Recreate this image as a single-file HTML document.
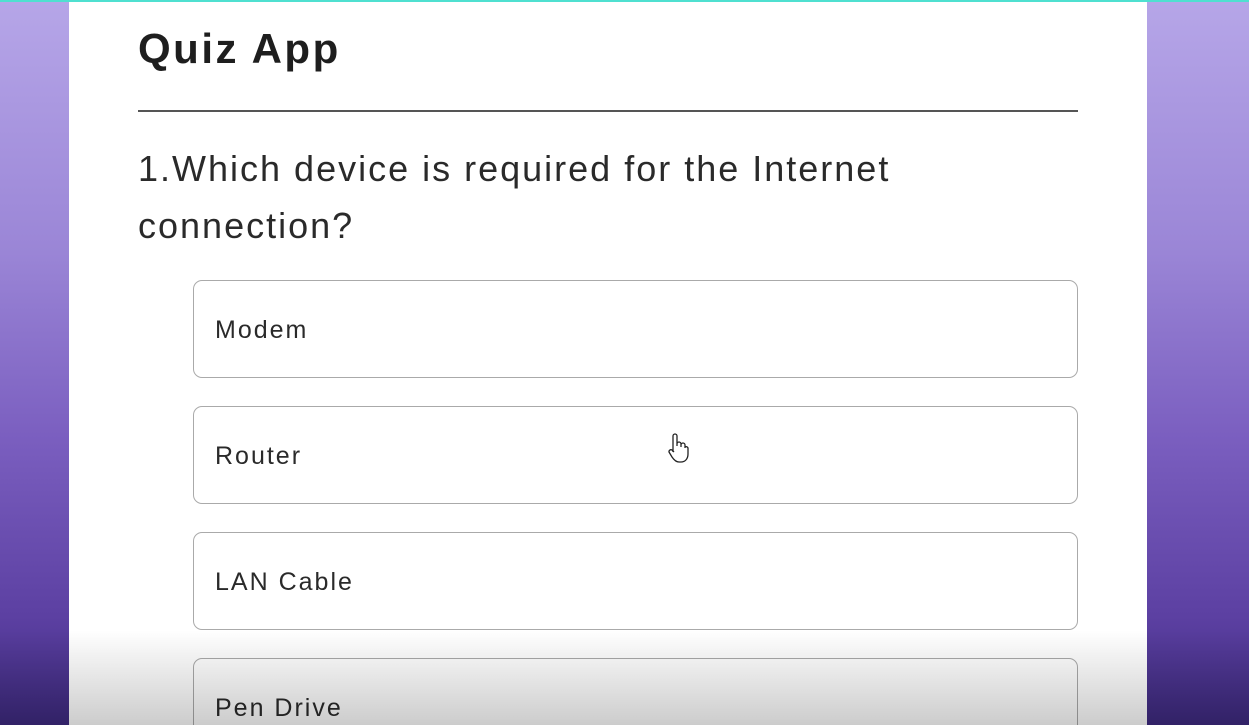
<!DOCTYPE html>
<html><head><meta charset="utf-8"><style>
html,body{margin:0;padding:0;width:1249px;height:725px;overflow:hidden;}
body{background:linear-gradient(#b6a6e8 0%,#9a85d6 35%,#7b5fc0 60%,#5c40a2 85%,#3e2a80 100%);position:relative;font-family:"Liberation Sans",sans-serif;color:#222;}
.top{position:absolute;left:0;top:0;width:1249px;height:2px;background:#4fe0d0;}
.card{position:absolute;left:69px;top:2px;width:1078px;height:723px;background:#fff;}
h1{position:absolute;left:69px;top:23px;margin:0;font-size:42px;font-weight:bold;letter-spacing:2.5px;color:#1e1e1e;}
.hr{position:absolute;left:69px;top:108px;width:940px;height:2px;background:#555;}
.q{position:absolute;left:69px;top:138px;width:790px;font-size:36px;line-height:57px;letter-spacing:2px;color:#2a2a2a;}
.opt{position:absolute;left:124px;border:1px solid #aaa;border-radius:9px;font-size:25px;letter-spacing:2px;line-height:98px;padding-left:21px;box-sizing:border-box;width:885px;height:98px;color:#2a2a2a;}
.fade{position:absolute;left:0;top:630px;width:1249px;height:95px;background:linear-gradient(rgba(0,0,0,0),rgba(0,0,0,0.2));}
</style></head><body>
<div class="top"></div>
<div class="card">
<h1>Quiz App</h1>
<div class="hr"></div>
<div class="q">1.Which device is required for the Internet connection?</div>
<div class="opt" style="top:278px">Modem</div>
<div class="opt" style="top:404px">Router</div>
<div class="opt" style="top:530px">LAN Cable</div>
<div class="opt" style="top:656px">Pen Drive</div>
<svg style="position:absolute;left:598px;top:430px" width="22" height="34" viewBox="0 0 22 34"><path d="M6 20V4a2 2 0 0 1 4 0v10M10 12a2 2 0 0 1 4 0v3M14 13a2 2 0 0 1 4 0v3M18 15a2 2 0 0 1 3 1v6c0 5-3 8-7 8h-2c-3 0-5-2-7-5l-3-5a2 2 0 0 1 3-2l2 2" fill="#fff" stroke="#222" stroke-width="1.3"/></svg>
</div>
<div class="fade"></div>
</body></html>
